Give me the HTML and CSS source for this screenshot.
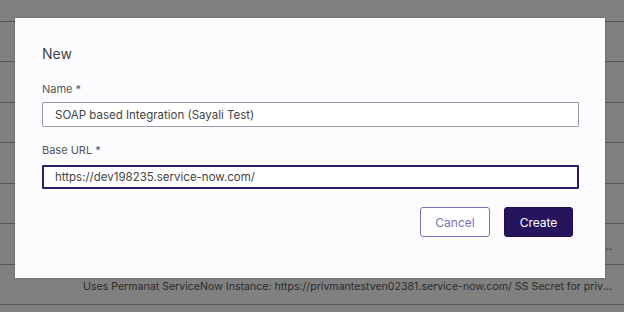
FILE: index.html
```html
<!DOCTYPE html>
<html lang="en">
<head>
    <meta charset="UTF-8">
    <meta name="viewport" content="width=device-width, initial-scale=1.0">
    <title>New Integration</title>
    <link rel="stylesheet" href="styles.css">
</head>
<body>
    <div class="table">
        <div class="row row-first"></div>
        <div class="row"></div>
        <div class="row"></div>
        <div class="row"></div>
        <div class="row"></div>
        <div class="row"></div>
        <div class="row"><span class="cell">Uses Permanat ServiceNow Instance: https://privmantestven02381.service-now.com/ SS Secret for privmantestven02381 admin</span></div>
        <div class="row"><span class="cell">Uses Permanat ServiceNow Instance: https://privmantestven02381.service-now.com/ SS Secret for privmantestven02381</span></div>
    </div>

    <div class="modal">
        <h2 class="modal-title">New</h2>

        <div class="field">
            <label for="name">Name *</label>
            <input type="text" id="name" value="SOAP based Integration (Sayali Test)">
        </div>

        <div class="field field-url">
            <label for="base-url">Base URL *</label>
            <input type="text" id="base-url" class="focused" value="https://dev198235.service-now.com/">
        </div>

        <div class="actions">
            <button class="btn btn-outline">Cancel</button>
            <button class="btn btn-primary">Create</button>
        </div>
    </div>
</body>
</html>
```

FILE: styles.css
```css
body {
    margin: 0;
    background-color: #808080;
    font-family: 'Inter', 'Noto Sans', sans-serif;
    color: #333;
    overflow: hidden;
    height: 312px;
}

.table {
    display: flex;
    flex-direction: column;
}

.row {
    box-sizing: border-box;
    height: 40.43px;
    flex-shrink: 0;
    border-bottom: 1px solid #555;
    display: flex;
    align-items: center;
    padding-left: 83px;
    padding-right: 9px;
}

.row-first {
    height: 22px;
}

.cell {
    font-size: 10.6px;
    color: #2b2b2b;
    white-space: nowrap;
    overflow: hidden;
    text-overflow: ellipsis;
    padding-top: 5px;
}

.modal {
    position: absolute;
    left: 15px;
    top: 18px;
    width: 590px;
    height: 260px;
    box-sizing: border-box;
    background-color: #fcfcff;
    box-shadow: 0 0 2px rgba(0, 0, 0, 0.3);
    padding: 27px 26px 0 27px;
    display: flex;
    flex-direction: column;
}

.modal-title {
    margin: 0 0 19px;
    font-size: 14px;
    line-height: 18px;
    font-weight: 400;
    color: #444;
}

.field {
    display: flex;
    flex-direction: column;
}

.field label {
    font-size: 11px;
    line-height: 14px;
    color: #555;
    margin-bottom: 6px;
}

.field input {
    box-sizing: border-box;
    height: 25px;
    border: 1px solid #9b9aaa;
    border-radius: 1px;
    padding: 0 12px;
    font-family: inherit;
    font-size: 11.5px;
    color: #444;
    background-color: #fff;
}

.field-url {
    margin-top: 16px;
}

.field-url label {
    margin-bottom: 8px;
}

.field input.focused {
    border: 2px solid #2a1d63;
    height: 24px;
    padding: 0 11px;
}

.actions {
    display: flex;
    justify-content: flex-end;
    gap: 14px;
    margin-top: 18px;
    padding-right: 6px;
}

.btn {
    box-sizing: border-box;
    height: 30px;
    border-radius: 3px;
    font-family: inherit;
    font-size: 12px;
    cursor: pointer;
}

.btn-outline {
    width: 70px;
    background-color: #fff;
    border: 1px solid #7c70bd;
    color: #7a70b0;
}

.btn-primary {
    width: 69px;
    background-color: #26145f;
    border: 1px solid #1e0f50;
    color: #fff;
}
```
